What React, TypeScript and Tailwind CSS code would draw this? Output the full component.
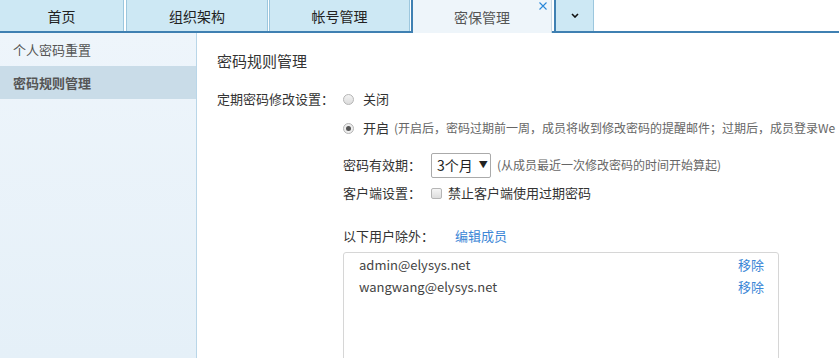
import React from "react";

const font = { fontFamily: '"Noto Sans CJK SC", "Noto Sans", sans-serif' };

export default function App() {
  return (
    <div className="w-[839px] h-[358px] overflow-hidden bg-white text-[#333]" style={font}>
      {/* Tab bar */}
      <div className="relative h-[33px] flex items-stretch">
        <div className="absolute left-0 right-0 bottom-0 h-[2px] bg-[#3f80b2]" />
        <div className="w-[124px] h-[31px] bg-[#cde8f4] border-r border-[#9cc7de] flex items-center justify-center pt-[2px] text-[14px] text-[#222]">首页</div>
        <div className="w-[2px]" />
        <div className="w-[142px] h-[31px] bg-[#cde8f4] border-x border-[#9cc7de] flex items-center justify-center pt-[2px] text-[14px] text-[#222]">组织架构</div>
        <div className="w-[1px]" />
        <div className="w-[141px] h-[31px] bg-[#cde8f4] border-x border-[#9cc7de] flex items-center justify-center pt-[2px] text-[14px] text-[#222]">帐号管理</div>
        <div className="w-[1px]" />
        <div className="relative z-10 w-[141px] h-[33px] bg-[#eef5fa] border-l-2 border-[#3f80b2] border-r border-r-[#c9d9e4] flex items-start pt-[7px] justify-center text-[14px] text-[#555]">
          密保管理
          <svg className="absolute right-[4px] top-[2px]" width="8" height="8" viewBox="0 0 8 8">
            <path d="M0.5 0.5 L7.5 7.5 M7.5 0.5 L0.5 7.5" stroke="#2a87d8" strokeWidth="1.1" />
          </svg>
        </div>
        <div className="w-[2px]" />
        <div className="relative z-10 w-[40px] h-[31px] bg-[#cde8f4] border-l-2 border-[#3f80b2] border-r border-r-[#9cc7de] flex items-center justify-center">
          <svg width="8" height="5" viewBox="0 0 8 5">
            <path d="M1 1 L4 4 L7 1" fill="none" stroke="#111" strokeWidth="1.6" />
          </svg>
        </div>
      </div>

      <div className="flex h-[325px]">
        {/* Sidebar */}
        <div className="w-[197px] shrink-0 border-r border-[#b9d6e8] bg-gradient-to-b from-[#eef5fb] to-[#e5f0f8]">
          <div className="h-[33px] flex items-center pl-[13px] text-[13px] text-[#555]">个人密码重置</div>
          <div className="h-[33px] flex items-center pl-[13px] text-[13px] font-bold text-[#555] bg-[#c9dce8]">密码规则管理</div>
        </div>

        {/* Main */}
        <div className="flex-1 pl-[20px] pt-[16px] whitespace-nowrap overflow-hidden">
          <div className="text-[15px] text-[#333] leading-[24px]">密码规则管理</div>

          <div className="mt-[15px] flex items-center h-[22px] text-[13px]">
            <span className="w-[126px] shrink-0">定期密码修改设置：</span>
            <span className="w-[11px] h-[11px] rounded-full border border-[#b5b5b5] bg-gradient-to-b from-[#f3f3f3] to-[#dcdcdc]" />
            <span className="ml-[9px]">关闭</span>
          </div>

          <div className="mt-[7px] flex items-center h-[22px] pl-[126px]">
            <span className="w-[11px] h-[11px] rounded-full border border-[#b5b5b5] bg-[#eeeeee] flex items-center justify-center">
              <span className="w-[5px] h-[5px] rounded-full bg-[#555]" />
            </span>
            <span className="ml-[9px] text-[13px]">开启</span>
            <span className="ml-[5px] text-[12px] text-[#666]">(开启后，密码过期前一周，成员将收到修改密码的提醒邮件；过期后，成员登录We</span>
          </div>

          <div className="mt-[13px] flex items-center h-[26px] pl-[126px] text-[13px]">
            <span className="w-[88px] shrink-0">密码有效期：</span>
            <span className="w-[60px] h-[25px] border border-[#aaa] rounded-[2px] flex items-center pl-[5px] text-[14px] text-[#222]">
              3个月<span className="ml-[6px] text-[9px]">▼</span>
            </span>
            <span className="ml-[6px] text-[12px] text-[#666]">(从成员最近一次修改密码的时间开始算起)</span>
          </div>

          <div className="mt-[4px] flex items-center h-[22px] pl-[126px] text-[13px]">
            <span className="w-[88px] shrink-0">客户端设置：</span>
            <span className="w-[11px] h-[11px] rounded-[2px] border border-[#b5b5b5] bg-gradient-to-b from-[#f5f5f5] to-[#dddddd]" />
            <span className="ml-[6px]">禁止客户端使用过期密码</span>
          </div>

          <div className="mt-[21px] flex items-center h-[22px] pl-[126px] text-[13px]">
            <span className="w-[112px] shrink-0">以下用户除外：</span>
            <span className="text-[#3a86d6]">编辑成员</span>
          </div>

          <div className="ml-[126px] mt-[5px] w-[436px] h-[120px] border border-[#d6d6d6] rounded-[3px] pt-[1px] text-[13px] text-[#444]">
            <div className="flex items-center justify-between h-[22px] pl-[15px] pr-[14px]">
              <span>admin@elysys.net</span>
              <span className="text-[#3a86d6]">移除</span>
            </div>
            <div className="flex items-center justify-between h-[22px] pl-[15px] pr-[14px]">
              <span>wangwang@elysys.net</span>
              <span className="text-[#3a86d6]">移除</span>
            </div>
          </div>
        </div>
      </div>
    </div>
  );
}
